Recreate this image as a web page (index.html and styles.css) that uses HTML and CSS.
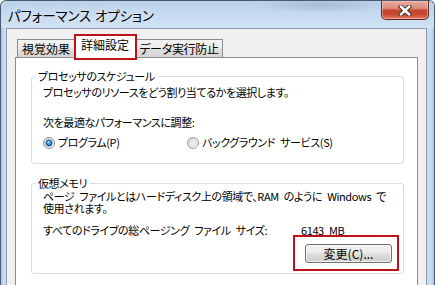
FILE: index.html
```html
<!DOCTYPE html>
<html lang="ja">
<head>
<meta charset="utf-8">
<title>パフォーマンス オプション</title>
<link rel="stylesheet" href="styles.css">
</head>
<body>
<div class="window">
  <div class="titlebar">
    <span class="title">パフォーマンス オプション</span>
    <button class="close" aria-label="閉じる">
      <svg width="16" height="11" viewBox="0 0 16 11">
        <path d="M4 1.8 L12 9.2 M12 1.8 L4 9.2" stroke="#3b2a2a" stroke-width="4.4" stroke-linecap="square" fill="none"/>
        <path d="M4 1.8 L12 9.2 M12 1.8 L4 9.2" stroke="#ffffff" stroke-width="2.6" stroke-linecap="square" fill="none"/>
      </svg>
    </button>
  </div>
  <div class="client">
    <div class="tabs">
      <div class="tab tab-1">視覚効果</div>
      <div class="tab tab-sel">詳細設定</div>
      <div class="tab tab-3">データ実行防止</div>
    </div>
    <div class="page">
      <fieldset class="group group-cpu">
        <legend>プロセッサのスケジュール</legend>
        <p class="line intro">プロセッサのリソースをどう割り当てるかを選択します。</p>
        <p class="line adjust">次を最適なパフォーマンスに調整:</p>
        <div class="radios">
          <label class="radio">
            <svg width="12" height="12" viewBox="0 0 12 12">
              <defs>
                <linearGradient id="ring1" x1="0" y1="0" x2="1" y2="1">
                  <stop offset="0" stop-color="#dcdcdc"/>
                  <stop offset="1" stop-color="#ffffff"/>
                </linearGradient>
                <radialGradient id="dot" cx="0.45" cy="0.4" r="0.6">
                  <stop offset="0" stop-color="#a9dcff"/>
                  <stop offset="0.55" stop-color="#3a8ad0"/>
                  <stop offset="1" stop-color="#17508e"/>
                </radialGradient>
              </defs>
              <circle cx="6" cy="6" r="5.5" fill="url(#ring1)" stroke="#8a8f96"/>
              <circle cx="6" cy="6" r="3.2" fill="url(#dot)" stroke="#1e4f80" stroke-width="0.6"/>
            </svg>
            <span>プログラム(P)</span>
          </label>
          <label class="radio">
            <svg width="12" height="12" viewBox="0 0 12 12">
              <defs>
                <linearGradient id="ring2" x1="0" y1="0" x2="1" y2="1">
                  <stop offset="0" stop-color="#d4d4d4"/>
                  <stop offset="1" stop-color="#fbfbfb"/>
                </linearGradient>
              </defs>
              <circle cx="6" cy="6" r="5.5" fill="url(#ring2)" stroke="#9a9ea4"/>
              <circle cx="6" cy="6" r="3.4" fill="#ececec" stroke="#d6d6d6" stroke-width="0.6"/>
            </svg>
            <span>バックグラウンド サービス(S)</span>
          </label>
        </div>
      </fieldset>
      <fieldset class="group group-vm">
        <legend>仮想メモリ</legend>
        <p class="line desc">ページ ファイルとはハードディスク上の領域で、RAM のように Windows で<br>使用されます。</p>
        <div class="size">
          <span>すべてのドライブの総ページング ファイル サイズ:</span>
          <span>6143 MB</span>
        </div>
        <div class="actions">
          <span class="callout"><button class="btn">変更(C)...</button></span>
        </div>
      </fieldset>
    </div>
  </div>
</div>
</body>
</html>
```
FILE: styles.css
```css
* { box-sizing: border-box; }

html, body {
  margin: 0;
  padding: 0;
  width: 435px;
  height: 285px;
  overflow: hidden;
  background: #ffffff;
}

body {
  font-family: "Noto Sans CJK JP", "Noto Sans", sans-serif;
  font-size: 11px;
  letter-spacing: -0.4px;
  word-spacing: 3px;
  color: #000;
  font-feature-settings: "palt";
}

.window {
  width: 435px;
  height: 285px;
  display: flex;
  flex-direction: column;
  border: 1px solid #4a5a6e;
  border-bottom: none;
  border-radius: 6px 6px 0 0;
  padding: 0 7px 0 5px;
  background:
    linear-gradient(90deg, #a9c5e6 0, #c9dcf1 3px, #c9dcf1 calc(100% - 3px), #a9c5e6 100%);
}

.titlebar {
  height: 27px;
  display: flex;
  align-items: flex-start;
  margin: 0 -7px 0 -5px;
  padding: 0 5px 0 7px;
  border-radius: 5px 5px 0 0;
  background:
    radial-gradient(ellipse 70px 8px at 320px 4px, rgba(150,170,195,0.55), rgba(150,170,195,0) 100%),
    linear-gradient(180deg, #bcd2ea 0%, #c6daf0 50%, #cfe1f4 100%);
}

.title {
  margin-top: 6px;
  font-size: 13.5px;
  line-height: 16px;
  letter-spacing: -0.1px;
  word-spacing: 1px;
  color: #000;
  text-shadow: 0 0 6px rgba(255,255,255,0.9);
}

.close {
  margin-left: auto;
  width: 48px;
  height: 19px;
  padding: 0;
  border: 1px solid #5b2a22;
  border-top: none;
  border-radius: 0 0 5px 5px;
  background: linear-gradient(180deg, #e7ab9c 0%, #dc8f7d 40%, #c5442b 52%, #c8492f 75%, #e07a5f 100%);
  box-shadow: inset 0 0 0 1px rgba(255,210,200,0.5);
  display: flex;
  align-items: center;
  justify-content: center;
}

.close svg { display: block; }

.client {
  flex: 1;
  display: flex;
  flex-direction: column;
  border: 1px solid #8c9bad;
  border-bottom: none;
  background: #f0f0f0;
  padding: 5px 8px 0 8px;
}

.tabs {
  display: flex;
  align-items: flex-end;
  padding-left: 2px;
  height: 23px;
  font-size: 12px;
  letter-spacing: 0;
}

.tab {
  height: 18px;
  display: flex;
  align-items: center;
  justify-content: center;
  border: 1px solid #898c95;
  border-bottom: none;
  background: linear-gradient(180deg, #f3f3f3 0%, #ebebeb 50%, #dedede 51%, #d6d6d6 100%);
  line-height: 14px;
  white-space: nowrap;
}

.tab-1 { width: 57px; border-right: none; }
.tab-3 { width: 87px; border-left: none; letter-spacing: -0.3px; }

.tab-sel {
  position: relative;
  z-index: 1;
  width: 62px;
  height: 24px;
  margin-bottom: -1px;
  padding-bottom: 3px;
  background: #ffffff;
}

.tab-sel::after {
  content: "";
  position: absolute;
  left: -1px;
  right: -2px;
  top: -1px;
  bottom: -2px;
  border: 2px solid #c0101a;
}

.page {
  flex: 1;
  border: 1px solid #898c95;
  border-bottom: none;
  background: #ffffff;
  padding-left: 15px;
}

.group {
  width: 373px;
  margin: 12px 0 0 0;
  border: 1px solid #d5dfe5;
  border-radius: 3px;
  padding: 0 0 14px 11px;
  min-width: 0;
}

.group legend {
  margin-left: -8px;
  padding: 0 3px;
  line-height: 13px;
}

.group-vm {
  margin-top: 13px;
  padding-bottom: 2px;
}

.line {
  margin: 0;
  line-height: 13px;
  white-space: nowrap;
}

.intro { margin-top: 3px; }
.adjust { margin-top: 17px; }

.radios {
  margin-top: 7px;
  height: 13px;
  display: grid;
  grid-template-columns: 144px auto;
  align-items: center;
}

.radio {
  display: flex;
  align-items: center;
  gap: 3px;
  line-height: 13px;
  white-space: nowrap;
}

.radio svg { display: block; flex: none; }

.desc { line-height: 12px; }

.size {
  margin-top: 10px;
  display: grid;
  grid-template-columns: 258px auto;
  line-height: 12px;
  white-space: nowrap;
}

.actions {
  margin-top: -1px;
  display: flex;
  justify-content: flex-end;
  padding-right: 4px;
}

.callout {
  display: inline-block;
  border: 2px solid #c0101a;
  padding: 7px 5px 6px 10px;
}

.btn {
  display: block;
  width: 87px;
  height: 19px;
  padding: 0;
  font: inherit;
  font-size: 12px;
  letter-spacing: 0;
  word-spacing: 0;
  line-height: 16px;
  color: #000;
  border: 1px solid #707070;
  border-radius: 3px;
  background: linear-gradient(180deg, #f2f2f2 0%, #ebebeb 48%, #dddddd 52%, #cfcfcf 100%);
  box-shadow: inset 0 0 0 1px rgba(255,255,255,0.7);
}
```
